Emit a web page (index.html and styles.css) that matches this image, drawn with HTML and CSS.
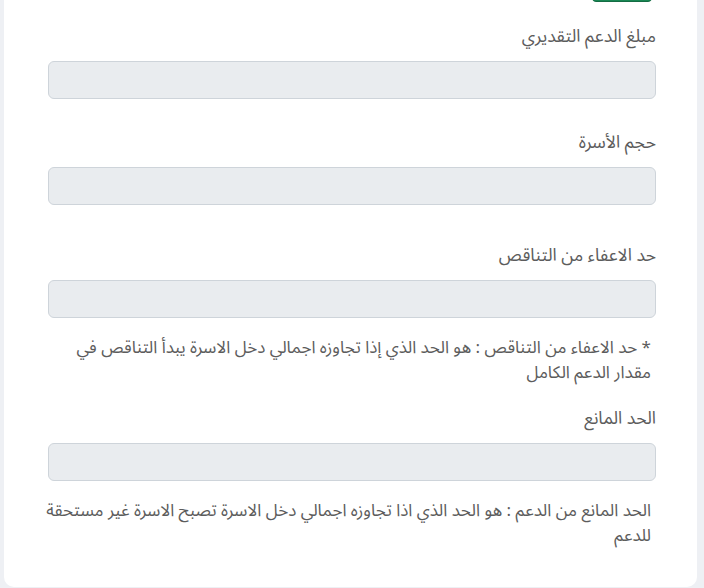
FILE: index.html
```html
<!DOCTYPE html>
<html lang="ar" dir="rtl">
<head>
	<meta charset="utf-8" />
	<title>بيانات الدعم</title>
	<link rel="stylesheet" href="styles.css">
</head>
<body>
	<div class="card">
		<div class="card-top">
			<button class="btn-save" type="button" aria-label="حفظ"></button>
		</div>

		<div class="field">
			<label class="field-label">مبلغ الدعم التقديري</label>
			<input class="field-input" type="text" disabled>
		</div>

		<div class="field field-wide">
			<label class="field-label">حجم الأسرة</label>
			<input class="field-input" type="text" disabled>
		</div>

		<div class="field field-note">
			<label class="field-label">حد الاعفاء من التناقص</label>
			<input class="field-input" type="text" disabled>
			<p class="note">* حد الاعفاء من التناقص : هو الحد الذي إذا تجاوزه اجمالي دخل الاسرة يبدأ التناقص في مقدار الدعم الكامل</p>
		</div>

		<div class="field field-last">
			<label class="field-label">الحد المانع</label>
			<input class="field-input" type="text" disabled>
			<p class="note">الحد المانع من الدعم : هو الحد الذي اذا تجاوزه اجمالي دخل الاسرة تصبح الاسرة غير مستحقة للدعم</p>
		</div>
	</div>
</body>
</html>
```

FILE: styles.css
```css
body {margin:0; padding:0; background:#eef0f4; font-family:"Noto Sans Arabic","DejaVu Sans","Noto Sans",sans-serif; color:#5c5c5c;}

.card {margin:-36px 7px 4px 4px; padding:0 41px 38px 44px; background:#fff; border-radius:0 0 10px 10px;}
.card-top {display:flex; padding-right:4px; margin-bottom:23px;}

.btn-save {width:60px; height:38px; border:1px solid #146c43; border-radius:4px; background:#198754;}

.field {display:flex; flex-direction:column; margin-bottom:32px;}
.field-wide {margin-bottom:39px;}
.field-note {margin-bottom:21px;}
.field-last {margin-bottom:0;}

.field-label {font-size:17.5px; line-height:24px; margin-bottom:12px;}
.field-input {box-sizing:border-box; height:38px; width:100%; margin:0; border:1px solid #ced4da; border-radius:6px; background:#e9ecef;}

.note {margin:18px 5px 0 -5px; font-size:17px; line-height:25px;}
```
